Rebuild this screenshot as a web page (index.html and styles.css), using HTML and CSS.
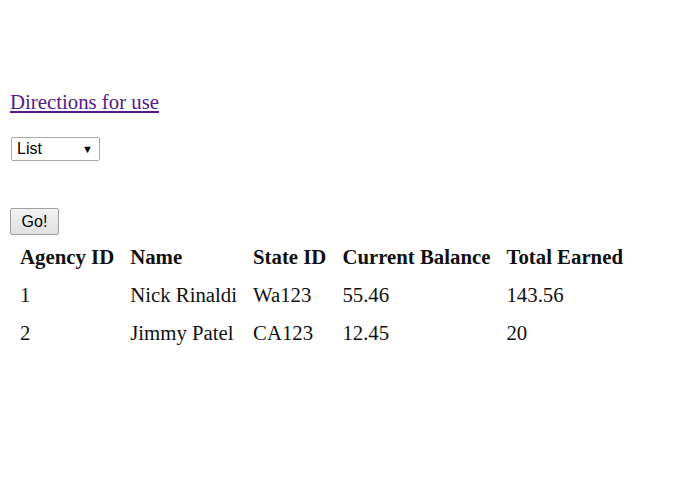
FILE: index.html
```html
<!DOCTYPE html>
<html>
<head>
<meta charset="utf-8">
<link rel="stylesheet" href="styles.css">
</head>
<body>
<p class="links"><a href="#" class="dir">Directions for use</a></p>
<div class="sel-row">
  <div class="select"><span>List</span><span class="arrow">▼</span></div>
</div>
<div class="btn-row"><button class="go">Go!</button></div>
<table class="data">
  <thead>
    <tr><th>Agency ID</th><th>Name</th><th>State ID</th><th>Current Balance</th><th>Total Earned</th></tr>
  </thead>
  <tbody>
    <tr><td>1</td><td>Nick Rinaldi</td><td>Wa123</td><td>55.46</td><td>143.56</td></tr>
    <tr><td>2</td><td>Jimmy Patel</td><td>CA123</td><td>12.45</td><td>20</td></tr>
  </tbody>
</table>
</body>
</html>
```
FILE: styles.css
```css
html, body { background: #fff; }
body {
  margin: 10px;
  font-family: "Liberation Serif", "Times New Roman", serif;
  font-size: 20.8px;
  color: #111;
}
.links { margin: 80px 0 0 0; line-height: 24px; }
.dir { color: #551a8b; text-decoration: underline; }
.sel-row { margin-top: 23px; }
.select {
  display: flex;
  align-items: center;
  justify-content: space-between;
  box-sizing: border-box;
  width: 89px;
  height: 24px;
  margin-left: 1px;
  padding: 0 6px 0 5px;
  border: 1px solid #a9a9a9;
  border-radius: 2px;
  background: #fff;
  font-family: "Liberation Sans", Arial, sans-serif;
  font-size: 16px;
  color: #000;
}
.arrow { font-size: 11px; }
.btn-row { margin-top: 47px; }
.go {
  display: block;
  box-sizing: border-box;
  width: 49px;
  height: 27px;
  padding: 0;
  border: 1px solid #a0a0a0;
  border-radius: 2px;
  background: linear-gradient(#f2f2f2, #e0e0e0);
  font-family: "Liberation Sans", Arial, sans-serif;
  font-size: 16px;
  color: #000;
}
.data { border-spacing: 2px; margin: 1px 0 0 1px; }
.data th, .data td {
  padding: 7px 7px 6px;
  text-align: left;
  line-height: 23px;
  white-space: nowrap;
}
.data th { font-weight: bold; }
```
